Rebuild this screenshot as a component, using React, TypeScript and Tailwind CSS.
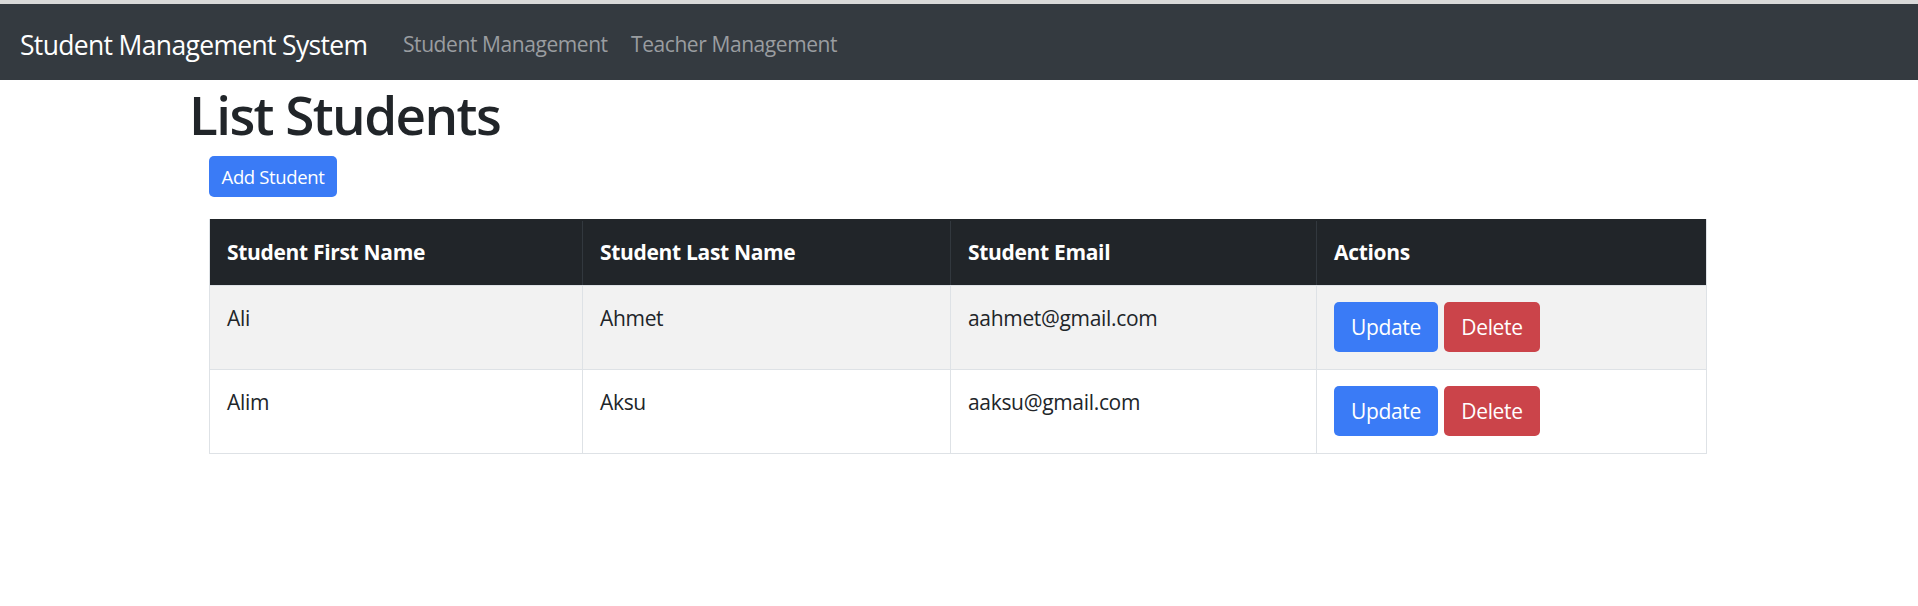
import React from "react";

const students = [
  { first: "Ali", last: "Ahmet", email: "aahmet@gmail.com" },
  { first: "Alim", last: "Aksu", email: "aaksu@gmail.com" },
];

const cols = "grid grid-cols-[373px_368px_366px_391px]";

export default function App() {
  return (
    <div className="min-h-[606px] bg-white font-['Open_Sans','Noto_Sans',sans-serif] text-[#212529]">
      <div className="h-[4px] bg-[#d9d9d9]" />
      <nav className="flex h-[76px] items-center bg-[#343a40] pl-[20px] pt-[5px]">
        <a className="block w-[383px] text-[26.5px] leading-[38px] tracking-[-0.025em] text-white">Student Management System</a>
        <div className="flex items-center text-[21px] leading-[33px] tracking-[-0.02em] text-[#9a9da0]">
          <a className="block w-[228px]">Student Management</a>
          <a className="block">Teacher Management</a>
        </div>
      </nav>
      <main className="mx-auto w-[1540px]">
        <h1 className="mt-[2px] text-[53px] font-semibold leading-[66px] tracking-[-0.03em]">List Students</h1>
        <div className="px-[20px]">
          <button className="mt-[8px] flex h-[41px] w-[128px] items-center justify-center rounded-[5px] bg-[#3a7bf6] text-[18.5px] tracking-[-0.02em] text-white">
            Add Student
          </button>
          <div className="mt-[22px] w-[1498px] border border-t-0 border-[#dee2e6] tracking-[-0.02em]">
            <div className={`${cols} h-[66px] bg-[#212529] pt-[2px] text-[21px] font-bold text-white`}>
              <div className="flex items-center border-r border-[#32383e] px-[17px]">Student First Name</div>
              <div className="flex items-center border-r border-[#32383e] px-[17px]">Student Last Name</div>
              <div className="flex items-center border-r border-[#32383e] px-[17px]">Student Email</div>
              <div className="flex items-center px-[17px]">Actions</div>
            </div>
            {students.map((s, i) => (
              <div
                key={s.email}
                className={`${cols} h-[84px] border-t border-[#dee2e6] text-[21px] leading-[33px] ${i === 0 ? "bg-[#f2f2f2]" : "bg-white"}`}
              >
                <div className="border-r border-[#dee2e6] px-[17px] pt-[16px]">{s.first}</div>
                <div className="border-r border-[#dee2e6] px-[17px] pt-[16px]">{s.last}</div>
                <div className="border-r border-[#dee2e6] px-[17px] pt-[16px]">{s.email}</div>
                <div className="flex items-start gap-[6px] px-[17px] pt-[16px]">
                  <button className="flex h-[50px] w-[104px] items-center justify-center rounded-[5px] bg-[#3a7bf6] text-[21px] text-white">
                    Update
                  </button>
                  <button className="flex h-[50px] w-[96px] items-center justify-center rounded-[5px] bg-[#cb444a] text-[21px] text-white">
                    Delete
                  </button>
                </div>
              </div>
            ))}
          </div>
        </div>
      </main>
    </div>
  );
}
